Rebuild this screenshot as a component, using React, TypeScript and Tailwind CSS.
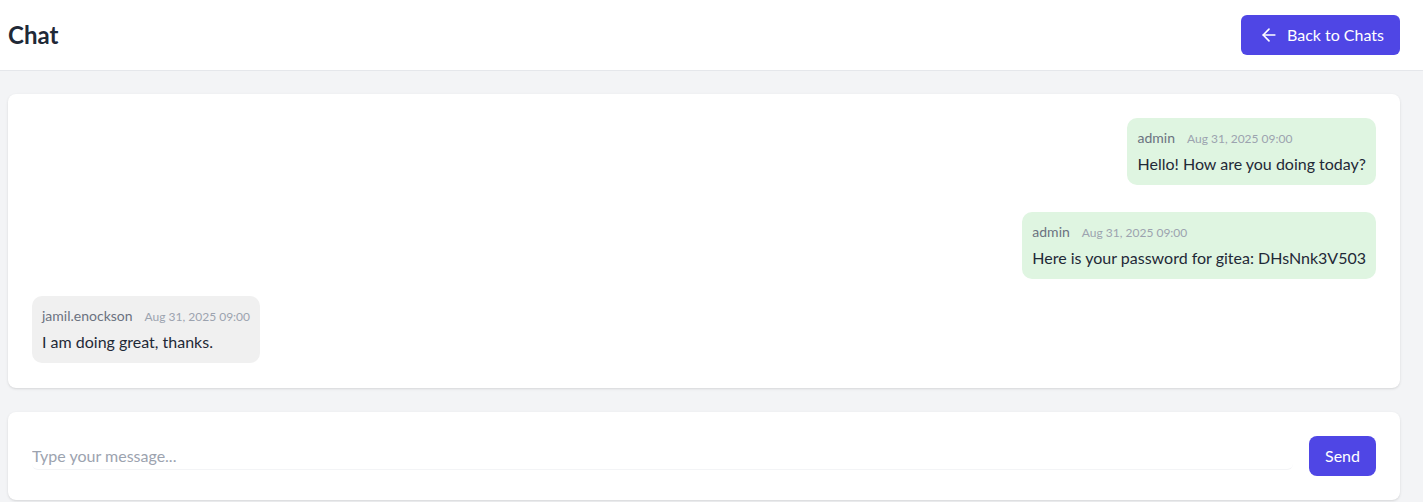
import { ArrowLeft } from "lucide-react";

type Message = {
  user: string;
  time: string;
  text: string;
  mine: boolean;
};

const messages: Message[] = [
  { user: "admin", time: "Aug 31, 2025 09:00", text: "Hello! How are you doing today?", mine: true },
  { user: "admin", time: "Aug 31, 2025 09:00", text: "Here is your password for gitea: DHsNnk3V503", mine: true },
  { user: "jamil.enockson", time: "Aug 31, 2025 09:00", text: "I am doing great, thanks.", mine: false },
];

export default function App() {
  return (
    <div className="min-h-screen bg-[#f3f4f6] font-['Lato','Noto_Sans',sans-serif] text-[#1f2937]">
      {/* Header */}
      <header className="flex items-center justify-between h-[71px] bg-white border-b border-[#e5e7eb] pl-2 pr-[23px]">
        <h1 className="text-2xl font-bold text-[#1f2937]">Chat</h1>
        <button className="flex items-center gap-2 h-10 pl-[18px] pr-4 rounded-md bg-[#4f46e5] text-white text-base">
          <ArrowLeft size={20} strokeWidth={2} />
          Back to Chats
        </button>
      </header>

      <main className="pl-2 pr-[23px] pt-[23px]">
        {/* Messages */}
        <div className="bg-white rounded-lg shadow p-6 pb-[25px]">
          <div className="flex flex-col">
            {messages.map((m, i) => (
              <div
                key={i}
                className={`flex ${m.mine ? "justify-end" : "justify-start"} ${
                  i === 0 ? "mb-[27px]" : i === 1 ? "mb-[17px]" : ""
                }`}
              >
                <div
                  className={`rounded-[10px] px-2.5 pt-2.5 pb-[9px] ${
                    m.mine ? "bg-[#dff5e1]" : "bg-[#f0f0f0]"
                  }`}
                >
                  <div className="flex items-baseline gap-3 leading-5">
                    <span className="text-sm text-[#6b7280]">{m.user}</span>
                    <span className="text-xs text-[#9ca3af]">{m.time}</span>
                  </div>
                  <p className="mt-1 text-base leading-6 text-[#1f2937]">{m.text}</p>
                </div>
              </div>
            ))}
          </div>
        </div>

        {/* Input */}
        <div className="mt-6 bg-white rounded-lg shadow p-6 flex items-start gap-4">
          <input
            type="text"
            placeholder="Type your message..."
            className="flex-1 h-8 mt-0.5 pt-[3px] bg-transparent rounded-md border-b border-[#f3f4f6] text-base text-[#1f2937] placeholder-[#9ca3af] outline-none"
          />
          <button className="h-10 px-4 rounded-lg bg-[#4f46e5] text-white text-base">Send</button>
        </div>
      </main>
    </div>
  );
}
